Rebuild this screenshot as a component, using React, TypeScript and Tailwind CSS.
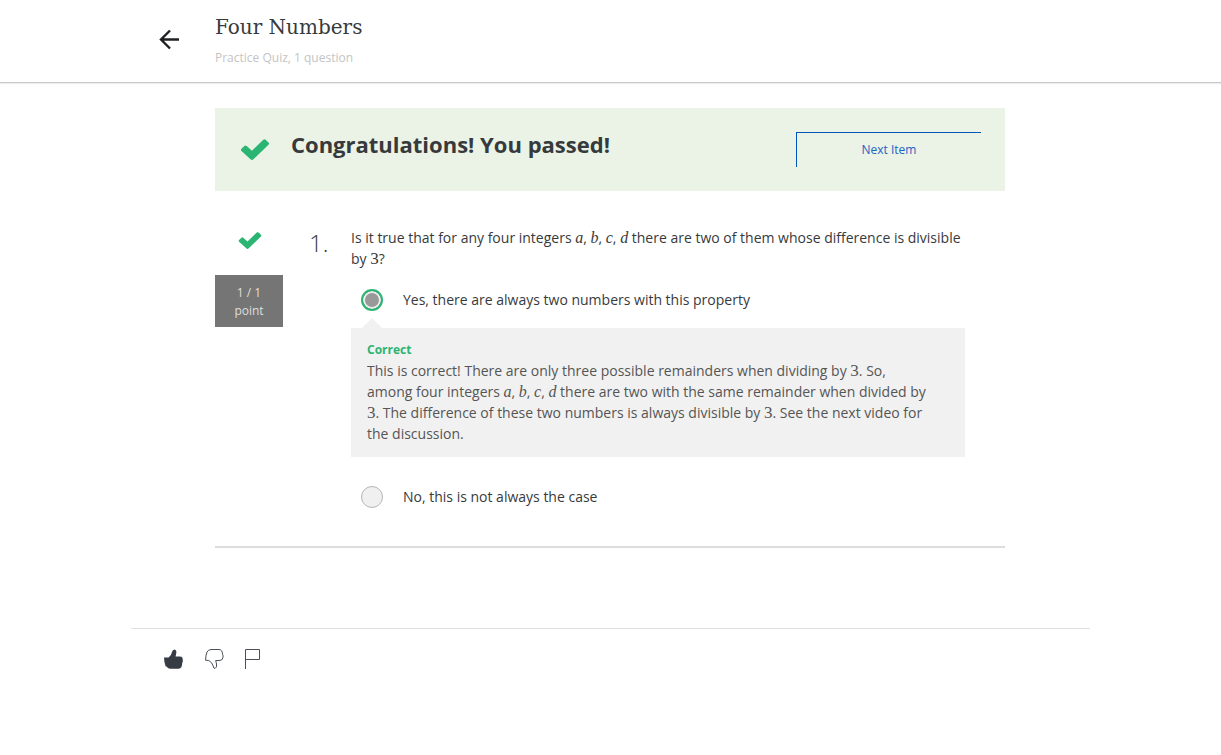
import type { ReactNode } from "react";

function Check({ className }: { className: string }) {
  return (
    <svg viewBox="0 0 28 21" className={className} fill="#2ab573" aria-hidden="true">
      <path d="M.5 12.100a1.600 1.600 0 0 1 0-2.300L3.400 7a1.700 1.700 0 0 1 2.300 0l5.200 4.800L22.300.7a1.700 1.700 0 0 1 2.300 0l2.900 2.700a1.700 1.700 0 0 1 0 2.300L12.100 20.500a1.700 1.700 0 0 1-2.300 0z" />
    </svg>
  );
}

function M({ children }: { children: ReactNode }) {
  return <span className="font-['Liberation_Serif',serif] text-base leading-5 italic">{children}</span>;
}

function N({ children }: { children: ReactNode }) {
  return <span className="font-['Liberation_Serif',serif] text-[17px] leading-5">{children}</span>;
}

function Variables() {
  return (
    <>
      <M>a</M>, <M>b</M>, <M>c</M>, <M>d</M>
    </>
  );
}

function Option({ id, checked, children }: { id: string; checked?: boolean; children: ReactNode }) {
  return (
    <div className="flex items-center gap-5 pl-[10px]">
      <input
        id={id}
        type="radio"
        name="answer"
        defaultChecked={checked}
        className="size-[22px] shrink-0 appearance-none rounded-full border border-[#b5b5b5] bg-[#f0f0f0] checked:border-2 checked:border-[#2ab573] checked:bg-[#999999] checked:shadow-[inset_0_0_0_2px_#eeeeee]"
      />
      <label htmlFor={id} className="leading-5">
        {children}
      </label>
    </div>
  );
}

export default function App() {
  return (
    <div className="min-h-screen bg-white font-['Open_Sans',sans-serif] text-sm text-[#373a3c]">
      <header className="border-b border-[#c8c8c8] shadow-[0_1px_1px_#eeeeee]">
        <div className="mx-auto flex max-w-[959px] items-start pt-3 pb-[15px]">
          <button type="button" aria-label="Back" className="mt-4 ml-7 w-14 shrink-0">
            <svg viewBox="0 0 22 22" className="size-[22px]" fill="none" stroke="#1f2022" strokeWidth="2.4" aria-hidden="true">
              <path d="M20 11.500H2M11 2.500L2 11.500l9 9" />
            </svg>
          </button>
          <div>
            <h1 className="font-['DejaVu_Serif',serif] text-xl leading-[30px]">Four Numbers</h1>
            <p className="mt-[7px] text-xs leading-[18px] text-[#c4c4c4]">Practice Quiz, 1 question</p>
          </div>
        </div>
      </header>

      <main className="mx-auto max-w-[959px] pt-[25px] pr-[85px] pl-[84px]">
        <section className="flex items-start bg-[#eaf3e6] p-6">
          <Check className="mt-[7px] ml-[2px] h-[21px] w-7 shrink-0" />
          <h2 className="ml-[22px] grow text-[22px] leading-6 font-bold">Congratulations! You passed!</h2>
          <button type="button" className="h-[35px] w-[185px] shrink-0 border-t border-l border-[#0056b8] text-xs text-[#1f62c4]">
            Next Item
          </button>
        </section>

        <section className="flex items-start border-b-2 border-[#dddddd] pt-9 pr-10 pb-[38px]">
          <div className="flex w-[68px] shrink-0 flex-col items-center pt-[5px]">
            <Check className="ml-[2px] h-[17px] w-6" />
            <p className="mt-[26px] w-full bg-[#757575] px-3 pt-[9px] pb-[7px] text-center text-xs leading-[18px] text-[#dedede]">
              1 / 1
              <br />
              point
            </p>
          </div>
          <p className="w-[68px] shrink-0 pl-[26px] text-2xl leading-8 font-light">1.</p>
          <div className="min-w-0 grow">
            <p className="leading-[21px]">
              Is it true that for any four integers <Variables /> there are two of them whose difference is divisible by{" "}
              <N>3</N>?
            </p>
            <div role="radiogroup" aria-label="Answers" className="pt-5">
              <Option id="yes" checked>
                Yes, there are always two numbers with this property
              </Option>
              <div className="relative mt-[17px] bg-[#f1f1f1] pt-3 pr-8 pb-[13px] pl-4 text-[#555555]">
                <span className="absolute bottom-full left-[11px] border-x-10 border-b-10 border-x-transparent border-b-[#f1f1f1]" />
                <p className="text-xs leading-5 font-bold text-[#2ab573]">Correct</p>
                <p className="leading-[21px]">
                  This is correct! There are only three possible remainders when dividing by <N>3</N>. So, among four
                  integers <Variables /> there are two with the same remainder when divided by <N>3</N>. The difference
                  of these two numbers is always divisible by <N>3</N>. See the next video for the discussion.
                </p>
              </div>
              <div className="mt-[29px]">
                <Option id="no">No, this is not always the case</Option>
              </div>
            </div>
          </div>
        </section>
      </main>

      <footer className="mx-auto mt-20 flex max-w-[959px] gap-5 border-t border-[#e1e1e1] pt-5 pl-[33px]">
        <button type="button" aria-label="Like">
          <svg viewBox="0 0 20 20" className="size-5" fill="#373c44" aria-hidden="true">
            <path d="M0 8.500H4.500Q7.500 6.500 8 3Q8.500 .500 10.500 .500Q12.800 1 12.300 4L11.600 7.500H16Q19 7.800 18.700 10.500Q19.200 12.500 18.200 14Q18.200 19.500 14.700 19.700H6.500Q4 19.700 2.500 17.500H1.700Q0 13 0 8.500Z" />
          </svg>
        </button>
        <button type="button" aria-label="Dislike">
          <svg viewBox="0 0 20 20" className="size-5" fill="none" stroke="#4b5058" aria-hidden="true">
            <path d="M1.500 11.200Q2 5 3 3Q4.200.800 7 .500H15Q18.500.800 18.500 5.200Q19.700 7 18.800 9Q18.500 11.700 15 11.500H11.700L12.500 15Q13.200 18.500 11 19.500Q9.500 19.500 9.200 17Q8.300 13.500 4.800 11.500Z" />
          </svg>
        </button>
        <button type="button" aria-label="Report a problem">
          <svg viewBox="0 0 20 20" className="size-5" fill="none" stroke="#4b5058" aria-hidden="true">
            <path d="M1.500 20V.500H15.500V10.500H1.500" />
          </svg>
        </button>
      </footer>
    </div>
  );
}
